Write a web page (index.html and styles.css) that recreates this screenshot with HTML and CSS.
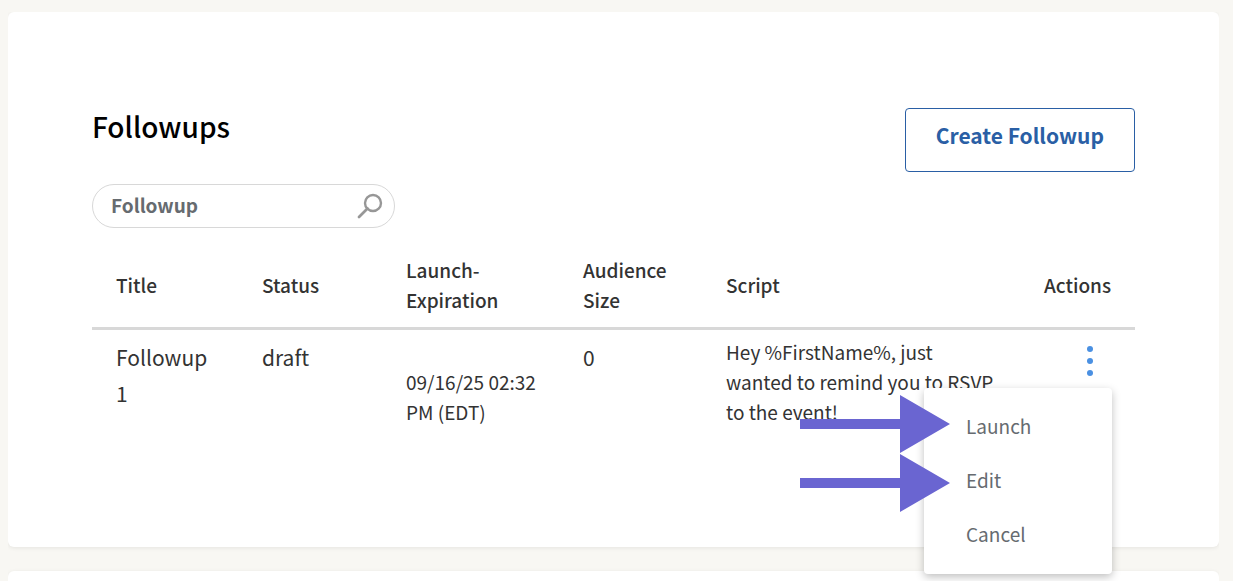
FILE: index.html
```html
<!DOCTYPE html>
<html lang="en">

<head>
    <meta charset="utf-8">
    <title>Followups</title>
    <link rel="stylesheet" href="styles.css">
</head>

<body>
    <section class="card">
        <div class="card-header">
            <h2>Followups</h2>
            <button type="button" class="btn-create">Create Followup</button>
        </div>

        <form class="search" role="search">
            <input type="text" class="search-input" placeholder="Followup" aria-label="Followup">
            <button type="submit" class="search-btn" aria-label="Search">
                <svg width="26" height="26" viewBox="0 0 26 26" fill="none" stroke="#979797">
                    <circle cx="16" cy="10" r="8" stroke-width="2.4" />
                    <path d="M10.5 15.5L2 24" stroke-width="2.8" stroke-linecap="round" />
                </svg>
            </button>
        </form>

        <table class="followups">
            <colgroup>
                <col class="col-title">
                <col class="col-status">
                <col class="col-launch">
                <col class="col-audience">
                <col>
                <col class="col-actions">
            </colgroup>
            <thead>
                <tr>
                    <th>Title</th>
                    <th>Status</th>
                    <th>Launch-Expiration</th>
                    <th>Audience Size</th>
                    <th>Script</th>
                    <th>Actions</th>
                </tr>
            </thead>
            <tbody>
                <tr>
                    <td>Followup 1</td>
                    <td>draft</td>
                    <td class="small launch">09/16/25 02:32 PM (EDT)</td>
                    <td>0</td>
                    <td class="small">Hey %FirstName%, just wanted to remind you to RSVP to the event!</td>
                    <td class="actions">
                        <div class="dropdown">
                            <button type="button" class="dots" aria-label="Actions">
                                <svg width="6" height="30" viewBox="0 0 6 30" fill="#4a90e2">
                                    <circle cx="3" cy="3" r="3" />
                                    <circle cx="3" cy="15" r="3" />
                                    <circle cx="3" cy="27" r="3" />
                                </svg>
                            </button>
                            <div class="menu">
                                <button type="button" class="menu-item">Launch</button>
                                <button type="button" class="menu-item">Edit</button>
                                <button type="button" class="menu-item">Cancel</button>
                                <svg class="arrows" width="150" height="118" viewBox="0 0 150 118" fill="#6a65d1">
                                    <path d="M0 24H100V0L150 29L100 58V34H0Z" />
                                    <path d="M0 83H100V59L150 88L100 117V93H0Z" />
                                </svg>
                            </div>
                        </div>
                    </td>
                </tr>
            </tbody>
        </table>
    </section>

    <section class="card"></section>
</body>

</html>
```

FILE: styles.css
```css
* {
    box-sizing: border-box;
}

body {
    margin: 12px 14px 0 8px;
    background: #f8f7f3;
    color: #333;
    font-family: "Noto Sans CJK SC", "Noto Sans", sans-serif;
    overflow: hidden;
}

button,
input {
    font-family: inherit;
}

.card {
    min-height: 40px;
    margin-bottom: 24px;
    padding: 96px 84px 120px;
    background: #fff;
    border-radius: 6px;
    box-shadow: 0 1px 4px rgba(0, 0, 0, 0.08);
}

.card-header {
    display: flex;
    justify-content: space-between;
    align-items: flex-start;
    margin-bottom: 12px;
}

h2 {
    margin: 0;
    color: #000;
    font-size: 28px;
    font-weight: 500;
    line-height: 36px;
}

.btn-create {
    height: 64px;
    padding: 0 30px 10px;
    background: #fff;
    border: 1px solid #2a5fa5;
    border-radius: 4px;
    color: #2a5fa5;
    font-size: 21px;
    font-weight: 700;
    cursor: pointer;
}

.search {
    display: flex;
    align-items: center;
    width: 303px;
    height: 44px;
    padding: 0 11px 0 18px;
    border: 1px solid #d8d8d8;
    border-radius: 22px;
}

.search-input {
    flex: 1;
    min-width: 0;
    padding: 0 0 4px;
    border: 0;
    outline: 0;
    background: none;
    font-size: 19px;
    font-weight: 700;
}

.search-input::placeholder {
    color: #666b70;
}

.search-btn {
    display: flex;
    padding: 0;
    border: 0;
    background: none;
    cursor: pointer;
}

.followups {
    width: 100%;
    margin-top: 16px;
    table-layout: fixed;
    border-collapse: collapse;
}

.col-title {
    width: 146px;
}

.col-status {
    width: 144px;
}

.col-launch {
    width: 177px;
}

.col-audience {
    width: 143px;
}

.col-actions {
    width: 115px;
}

th {
    padding: 11px 24px 12px;
    border-bottom: 3px solid #d8d8d8;
    font-size: 19px;
    font-weight: 500;
    line-height: 30px;
    text-align: left;
}

td {
    padding: 9px 24px 0;
    font-size: 21px;
    line-height: 36px;
    vertical-align: top;
}

td.small {
    padding-top: 7px;
    font-size: 19px;
    line-height: 30px;
}

td.launch {
    padding-top: 37px;
    padding-right: 16px;
}

th:last-child {
    text-align: right;
}

td.actions {
    padding-top: 16px;
}

.dropdown {
    position: relative;
    display: flex;
    justify-content: flex-end;
    padding-right: 18px;
}

.dots {
    display: flex;
    padding: 0;
    border: 0;
    background: none;
    cursor: pointer;
}

.menu {
    position: absolute;
    top: 42px;
    right: -1px;
    width: 188px;
    padding: 12px 0;
    background: #fff;
    border-radius: 4px;
    box-shadow: 0 3px 8px rgba(0, 0, 0, 0.25);
}

.menu-item {
    display: block;
    width: 100%;
    height: 54px;
    padding: 0 42px 4px;
    border: 0;
    background: none;
    color: #666b70;
    font-size: 19px;
    text-align: left;
    cursor: pointer;
}

.arrows {
    position: absolute;
    top: 7px;
    right: 162px;
    pointer-events: none;
}
```
